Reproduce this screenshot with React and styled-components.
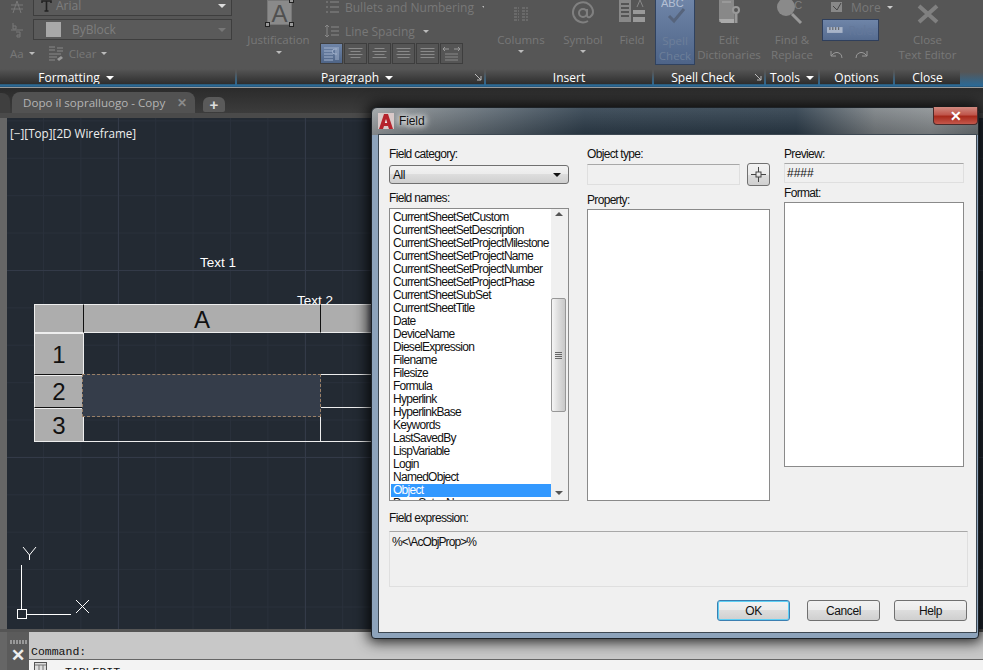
import React from 'react';
import styled, { createGlobalStyle, css } from 'styled-components';

const Global = createGlobalStyle`
  html, body { margin: 0; padding: 0; background: #333; }
  #root { width: 983px; height: 670px; }
`;
const Page = styled.div`
  position: relative; width: 983px; height: 670px; overflow: hidden;
  display: flex; flex-direction: column; font-family: "Liberation Sans", Arial, sans-serif;
`;
/* ---------- ribbon ---------- */
const Ribbon = styled.div`
  display: flex; gap: 2px; height: 88px; flex: none; box-sizing: border-box;
  padding-bottom: 2px; border-bottom: 1px solid #9a9a9a;
  background: linear-gradient(#565656 0, #565656 72px, #2a6a98 86px, #1f2f3a 88px);
`;
const Panel = styled.section`
  width: ${p => p.$w}px; height: 85px; flex: none; display: flex; flex-direction: column;
  background: #565656; overflow: hidden; position: relative;
  border-bottom: 1px solid #2b5c7c; box-sizing: border-box;
`;
const PanelBody = styled.div`
  flex: none; height: 69px; display: flex; position: relative; font-family: "Open Sans", sans-serif;
  font-size: 11.5px; color: #787878; line-height: 15px;
`;
const PanelTitle = styled.div`
  flex: none; height: 15px; box-sizing: border-box; display: flex; align-items: center; justify-content: center; gap: 6px;
  padding: 2px ${p => p.$pr || 0}px 0 0;
  color: #fff; font-family: "Open Sans", sans-serif; font-size: 12px; line-height: 13px;
  background: linear-gradient(#565656, #2e2e2e);
`;
const Launcher = styled.svg`
  position: absolute; right: 2px; bottom: 3px; width: 7px; height: 7px;
`;
const TitleCaret = styled.i`
  width: 0; height: 0; border: 4px solid transparent; border-top-color: #fff; border-bottom: 0;
`;
const Caret = styled.i`
  display: inline-block; width: 0; height: 0; flex: none; border: 3px solid transparent;
  border-top-color: ${p => p.$c || '#a0a0a0'}; border-bottom: 0;
`;
const FormatCol = styled.div`
  display: flex; flex-direction: column; width: 100%; margin-top: -5px;
`;
const FormatRow = styled.div`
  display: flex; align-items: center; height: 21px; margin-bottom: ${p => p.$mb || 3}px; padding-left: ${p => p.$pl || 0}px;
`;
const SideIcon = styled.svg`
  width: 14px; height: 16px; margin: 0 9px 0 10px; flex: none;
`;
const Select = styled.div`
  width: 199px; height: 21px; box-sizing: border-box; display: flex; align-items: center; gap: ${p => p.$gap ?? 6}px;
  border: 1px solid #3e3e3e; padding: 0 5px 0 ${p => p.$pl}px; font-family: "Open Sans", sans-serif;
  font-size: 12px; background: #5a5a5a; color: #7e7e7e;
  & > ${Caret} { margin-left: auto; border-width: 4px; border-bottom: 0; border-top-color: ${p => p.$cc || '#ddd'}; }
`;
const Swatch = styled.b`
  width: 15px; height: 15px; background: #a8a8a8; margin-right: 5px;
`;
const MiniItem = styled.span`
  display: inline-flex; align-items: center; gap: 5px; margin-right: ${p => p.$mr || 0}px;
`;
const JustifyCol = styled.div`
  width: 83px; flex: none; display: flex; flex-direction: column; align-items: center; margin-left: 0;
  padding-top: 32px; position: relative;
`;
const BigA = styled.div`
  position: absolute; top: 0; left: 30px; width: 25px; height: 25px; box-sizing: border-box;
  background: #8a8a8a; border: 1px solid #777; color: #505050; font: 24px/25px "Liberation Sans", sans-serif;
  text-align: center;
`;
const Handle = styled.i`
  position: absolute; width: 3px; height: 3px; border: 1px solid #222; background: #999;
  ${p => p.$pos === 'bl' ? css`left: -3px; bottom: -3px;` : p.$pos === 'br' ? css`right: -3px; bottom: -3px;` : css`top: -3px; right: -3px;`}
`;
const StackCol = styled.div`
  display: flex; flex-direction: column; padding-top: 0;
`;
const ListRow = styled.div`
  display: flex; align-items: center; gap: 6px; height: 24px; padding-left: 5px; font-size: 12px; white-space: nowrap;
`;
const AlignRow = styled.div`
  display: flex; gap: 1px;
`;
const AlignBtn = styled.div`
  width: 23px; height: 21px; box-sizing: border-box; display: flex; align-items: center; justify-content: center;
  border: 1px solid #3e3e3e; background: ${p => p.$on ? 'linear-gradient(#6f85a8,#4f6587)' : '#555'};
`;
const BigTool = styled.div`
  width: ${p => p.$w}px; flex: none; margin-left: ${p => p.$ml || 0}px; display: flex; flex-direction: column;
  align-items: center; text-align: center; padding-top: ${p => p.$on ? 33 : 32}px; position: relative; box-sizing: border-box;
  ${p => p.$on && css`background: linear-gradient(#6f85a8,#4e6488); border: 1px solid #30425f; height: 66px; margin-top: -1px;`}
  color: ${p => p.$on ? '#6d7f9a' : '#787878'};
  & > svg:first-child { position: absolute; top: ${p => p.$t ?? -1}px; left: 50%; transform: translateX(-50%); }
  & > ${Caret} { margin-top: 3px; }
`;
const OptionsCol = styled.div`
  display: flex; flex-direction: column; width: 100%; padding-left: 2px; font-size: 12px;
`;
const MoreRow = styled.div`
  display: flex; align-items: center; gap: 8px; height: 14px; margin-bottom: 5px; padding-left: 8px;
`;
const RulerBtn = styled.div`
  width: 57px; height: 22px; box-sizing: border-box; display: flex; align-items: center; gap: 6px; padding-left: 4px;
  border: 1px solid #2f3f5c; background: linear-gradient(#6f85a8,#566c90); color: #64789a;
`;
const UndoRow = styled.div`
  display: flex; gap: 12px; padding: 9px 0 0 8px;
`;
/* ---------- tabs ---------- */
const TabBar = styled.div`
  flex: none; height: 30px; display: flex; align-items: flex-end; background: linear-gradient(#2b2b2b, #3c3c3c);
  box-sizing: border-box; border-bottom: 5px solid #4a4a4a;
`;
const GhostTab = styled.div`
  width: 10px; height: 20px; background: #3f3f3f; border-radius: 0 8px 0 0;
`;
const Tab = styled.div`
  width: 183px; height: 21px; margin-left: 2px; display: flex; align-items: center; box-sizing: border-box;
  padding-left: 11px; background: #525252; border-radius: 8px 8px 0 0; color: #b4b4b4;
  font: 11.6px "Open Sans", sans-serif;
`;
const TabClose = styled.span`
  margin-left: 12px; color: #8a8a8a; font-size: 12px; font-weight: 700;
`;
const AddTab = styled.div`
  width: 22px; height: 15px; margin: 0 0 1px 8px; border-radius: 6px 6px 2px 2px; background: #5a5a5a;
  color: #ddd; font: 700 15px/15px "Liberation Sans", sans-serif; text-align: center;
`;
/* ---------- drawing area ---------- */
const Work = styled.div`
  flex: none; height: 511px; display: flex; background: #666;
`;
const Canvas = styled.div`
  margin-left: 7px; flex: 1; position: relative; overflow: hidden;
  background-color: #232a33;
  background-image:
    linear-gradient(90deg, #333a48 1px, transparent 1px),
    linear-gradient(#333a48 1px, transparent 1px),
    linear-gradient(90deg, #29303b 1px, transparent 1px),
    linear-gradient(#29303b 1px, transparent 1px);
  background-size: 187px 187px, 187px 187px, 37.4px 37.4px, 37.4px 37.4px;
  background-position: 111px 0, 0 152px, 36px 0, 0 2.4px;
`;
const ViewLabel = styled.div`
  position: absolute; left: 3px; top: 7px; color: #eee; font: 11.7px "Open Sans", sans-serif;
`;
const DrawText = styled.div`
  position: absolute; left: ${p => p.$x}px; top: ${p => p.$y}px; color: #fff; font-size: 13.5px; line-height: 14px;
`;
const Sheet = styled.div`
  position: absolute; left: 27px; top: 186px; width: 340px; display: grid;
  grid-template-columns: 50px 237px 53px; grid-template-rows: 29px 42px 33px 34px;
  font-family: "Liberation Sans", sans-serif; color: #111;
`;
const HeadCell = styled.div`
  background: #adadad; display: flex; align-items: center; justify-content: center; font-size: ${p => p.$fs || 24}px;
  padding-top: ${p => p.$pt || 0}px;
  box-sizing: border-box; border-top: 1px solid #eee; border-bottom: 1px solid ${p => p.$bb || '#eee'};
  border-right: 1px solid ${p => p.$br || '#111'}; border-left: ${p => p.$bl ? '1px solid #eee' : '0'};
  ${p => p.$fade && css`background: linear-gradient(90deg,#adadad 85%,#667 100%); border-right: 0;`}
`;
const BodyCell = styled.div`
  box-sizing: border-box; border-bottom: 1px solid ${p => p.$b || 'transparent'}; border-right: 1px solid ${p => p.$r || 'transparent'};
`;
const SelectedCell = styled.div`
  position: absolute; left: 48px; top: 70px; width: 239px; height: 43px; box-sizing: border-box;
  background: #353d4a; border: 1px dashed #9a8068;
`;
const Ucs = styled.svg`
  position: absolute; left: 10px; top: 427px;
`;
/* ---------- command line ---------- */
const Command = styled.div`
  flex: 1; display: flex; background: #666; border-top: 3px solid #555; padding-left: 7px;
`;
const Grip = styled.div`
  width: 22px; flex: none; background: #5b5b5b; display: flex; flex-direction: column; align-items: center;
  color: #eee; font: 700 17px/17px "Liberation Sans", sans-serif; padding-top: 8px; box-sizing: border-box;
  &::before { content: ""; width: 17px; height: 4px; margin-bottom: 3px; background: repeating-linear-gradient(90deg,#999 0 2px,transparent 2px 3px); }
`;
const CommandMain = styled.div`
  flex: 1; display: flex; flex-direction: column;
`;
const CommandHead = styled.div`
  height: 28px; box-sizing: border-box; background: #c8c8c8; border-bottom: 1px solid #666; padding: 13px 0 0 2px;
  font: 11.5px/14px "Liberation Mono", monospace; color: #111;
`;
const History = styled.div`
  flex: 1; background: #f3f3f3; display: flex; align-items: flex-start; gap: 11px; padding: 2px 0 0 5px;
  font: 11.5px/14px "Liberation Mono", monospace; color: #111; overflow: hidden;
  & > span { margin-top: 3px; }
`;
/* ---------- dialog ---------- */
const Dialog = styled.div`
  position: absolute; left: 371px; top: 107px; width: 608px; height: 532px; box-sizing: border-box;
  border: 1px solid #1d2227; border-radius: 6px 6px 4px 4px; padding: 26px 1px 5px 6px;
  background:
    linear-gradient(rgba(255,255,255,.1), rgba(0,0,0,.18)) 0 0 / 100% 27px no-repeat,
    linear-gradient(90deg, #9ea3a6 0, #7c8388 8%, #5a6670 20%, #2f3f4d 35%, #2c3c4a 70%, #7a8084 83%, #8a8f92 92%, #6d7478 100%) 0 0 / 100% 27px no-repeat,
    #8da3bb;
  box-shadow: 0 0 14px 3px rgba(0,0,0,.85);
`;
const WinIcon = styled.svg`
  position: absolute; left: 6px; top: 5px;
`;
const WinTitle = styled.div`
  position: absolute; left: 27px; top: 6px; font: 12px/14px "Liberation Sans", sans-serif; color: #111;
  letter-spacing: -.1px; text-shadow: 0 0 6px #fff, 0 0 6px #fff, 0 0 10px #fff;
`;
const WinClose = styled.div`
  position: absolute; right: 0; top: -1px; width: 45px; height: 18px; box-sizing: border-box; border: 1px solid #4a2a2a;
  border-top: 0; border-radius: 0 0 4px 4px; display: flex; align-items: center; justify-content: center;
  background: linear-gradient(#d08a80 0,#c0564c 45%,#a82a1c 55%,#c4584c 100%);
  color: #fff; font: 700 14px/14px "Liberation Sans", sans-serif;
`;
const Client = styled.div`
  height: 100%; box-sizing: border-box; background: #f0f0f0; border: 1px solid #3d4852; padding: 12px 8px 0 10px;
  display: flex; flex-direction: column; color: #111; font-size: 12px;
`;
const Columns = styled.div`
  display: flex; flex: none; height: 354px;
`;
const Col = styled.div`
  width: ${p => p.$w}px; margin-right: ${p => p.$mr || 0}px; flex: none; display: flex; flex-direction: column;
`;
const Label = styled.div`
  height: 14px; line-height: 14px; flex: none; margin-top: ${p => p.$mt || 0}px; letter-spacing: -0.68px;
`;
const Combo = styled.div`
  margin-top: 4px; height: 19px; box-sizing: border-box; border: 1px solid #707070; border-radius: 3px; flex: none;
  background: linear-gradient(#f2f2f2 0,#ebebeb 50%,#ddd 50%,#cfcfcf 100%); display: flex; align-items: center;
  justify-content: space-between; padding: 0 7px 0 3px; letter-spacing: -.4px;
`;
const ComboCaret = styled.i`
  width: 0; height: 0; border: 4px solid transparent; border-top-color: #111; border-bottom: 0; border-left-width: 4px;
`;
const ListBox = styled.div`
  margin-top: 3px; height: 293px; box-sizing: border-box; border: 1px solid #8a8a8a; background: #fff; display: flex;
  flex: none; overflow: hidden;
`;
const Items = styled.ul`
  list-style: none; margin: 0; padding: 2px 0 0 1px; width: 160px; flex: none; overflow: hidden;
`;
const Item = styled.li`
  height: 13px; line-height: 13px; padding-left: 2px; white-space: nowrap; letter-spacing: -0.72px;
  ${p => p.$sel && css`background: #3399ff; color: #fff;`}
`;
const ScrollBar = styled.div`
  width: 17px; flex: none; background: #f0f0f0; position: relative; display: flex; flex-direction: column; align-items: center;
`;
const ScrollArrow = styled.i`
  position: absolute; left: 4px; width: 0; height: 0; border: 4px solid transparent;
  ${p => p.$up ? css`top: 3px; border-bottom-color: #555; border-top: 0;` : css`bottom: 5px; border-top-color: #555; border-bottom: 0;`}
`;
const Thumb = styled.div`
  position: absolute; left: 0; top: 89px; width: 15px; height: 114px; box-sizing: border-box; border: 1px solid #979797; border-radius: 2px;
  background: linear-gradient(90deg,#f5f5f5,#dcdcdc 50%,#c8c8c8); display: flex; align-items: center; justify-content: center;
  &::after { content: ""; width: 7px; height: 7px; background: repeating-linear-gradient(#666 0 1px,transparent 1px 2px); }
`;
const DisabledBox = styled.div`
  box-sizing: border-box; background: #f0f0f0; border: 1px solid #dfdfdf; border-top-color: #a8a8a8; height: ${p => p.$h}px;
  flex: ${p => p.$grow ? 1 : 'none'}; margin-top: ${p => p.$mt || 0}px; padding: ${p => p.$pad || '0'};
  letter-spacing: ${p => p.$ls || 0}px;
`;
const ExpressionBox = styled(DisabledBox)`
  width: 579px;
`;
const PickRow = styled.div`
  display: flex; gap: 7px; margin-top: 2px; height: 23px; flex: none;
`;
const PickBtn = styled.button`
  width: 23px; height: 23px; padding: 0; box-sizing: border-box; border: 1px solid #707070; border-radius: 3px; display: flex;
  align-items: center; justify-content: center; background: linear-gradient(#f2f2f2 0,#ebebeb 50%,#ddd 50%,#cfcfcf 100%);
`;
const WhiteBox = styled.div`
  box-sizing: border-box; background: #fff; border: 1px solid #8a8a8a; height: ${p => p.$h}px; margin-top: 2px; flex: none;
`;
const Buttons = styled.div`
  display: flex; justify-content: flex-end; margin: 13px 1px 0 0;
`;
const Btn = styled.button`
  width: 73px; height: 21px; padding: 0; margin-left: ${p => p.$ml || 0}px; box-sizing: border-box; border-radius: 3px;
  border: 1px solid ${p => p.$def ? '#3c7fb1' : '#707070'}; color: #111; font: 12px "Liberation Sans", sans-serif;
  letter-spacing: -.4px;
  background: linear-gradient(#f2f2f2 0,#ebebeb 50%,#ddd 50%,#cfcfcf 100%);
  ${p => p.$def && css`box-shadow: inset 0 0 0 1px #5fd0f5;`}
`;

const names = ['CurrentSheetSetCustom','CurrentSheetSetDescription','CurrentSheetSetProjectMilestone','CurrentSheetSetProjectName','CurrentSheetSetProjectNumber','CurrentSheetSetProjectPhase','CurrentSheetSubSet','CurrentSheetTitle','Date','DeviceName','DieselExpression','Filename','Filesize','Formula','Hyperlink','HyperlinkBase','Keywords','LastSavedBy','LispVariable','Login','NamedObject','Object','PageSetupName'];
const G = '#787878';
const Lines = ({ d = [14,14,14,14] }) => (
  <svg width="17" height="15" viewBox="0 0 17 15">
    {d.map((w, i) => <rect key={i} x={(17 - w) / 2} y={2 + i * 3} width={w} height="1" fill="#8a8a8a" />)}
  </svg>
);

export default function App() {
  return (
    <Page>
      <Global />
      <Ribbon>
        <Panel $w={235}>
          <PanelBody>
            <FormatCol>
              <FormatRow>
                <SideIcon viewBox="0 0 14 16"><path d="M1 11h12M3 15l4-12 4 12M1 7h12" stroke={G} fill="none" /></SideIcon>
                <Select $pl={7} $gap={4}><svg width="11" height="14" viewBox="0 0 11 14"><path d="M1 4V2h9v2M5.500 2v10M3.500 12h4" stroke="#222" strokeWidth="1.6" fill="none" /></svg>Arial<Caret /></Select>
              </FormatRow>
              <FormatRow>
                <SideIcon viewBox="0 0 14 16"><path d="M1 8h12" stroke={G} /><path d="M3 1v6h3V4H3M6 10h4v5H7v-2h3" stroke={G} fill="none" /></SideIcon>
                <Select $pl={12} $cc="#777"><Swatch />ByBlock<Caret /></Select>
              </FormatRow>
              <FormatRow $pl={10}>
                <MiniItem $mr={13}>Aa<Caret $c="#bbb" /></MiniItem>
                <MiniItem><svg width="16" height="16" viewBox="0 0 16 16"><path d="M1 1h6M1 4h6M9 2h6M9 5h6M1 8h12M1 11h8M1 14h6" stroke="#888" /><path d="M9 13l4-3 2 2-4 3z" fill="#999" /></svg>Clear<Caret $c="#bbb" /></MiniItem>
              </FormatRow>
            </FormatCol>
          </PanelBody>
          <PanelTitle $pr={83}>Formatting<TitleCaret /></PanelTitle>
        </Panel>
        <Panel $w={247}>
          <PanelBody>
            <JustifyCol>
              <BigA>A<Handle $pos="bl" /><Handle $pos="br" /><Handle $pos="tr" /></BigA>
              Justification
              <Caret $c="#bbb" style={{ marginTop: 4 }} />
            </JustifyCol>
            <StackCol>
              <ListRow style={{ marginTop: -5 }}><svg width="14" height="14" viewBox="0 0 14 14"><path d="M1 2h2M1 7h2M1 12h2M5 2h9M5 7h9M5 12h9" stroke="#888" /></svg>Bullets and Numbering<Caret $c="#bbb" style={{ marginLeft: 2 }} /></ListRow>
              <ListRow><svg width="14" height="14" viewBox="0 0 14 14"><path d="M2 1v12M0 3l2-2 2 2M0 11l2 2 2-2M6 3h8M6 7h8M6 11h8" stroke="#888" fill="none" /></svg>Line Spacing<Caret $c="#bbb" style={{ marginLeft: 2 }} /></ListRow>
              <AlignRow>
                <AlignBtn $on><svg width="17" height="15" viewBox="0 0 17 15"><path d="M1 2h15M1 5h9M1 8h9M1 11h9M1 14h9" stroke="#a3b3cd" /><path d="M15 3v11M13 3v11M14 3h-2a2.500 2.500 0 0 0 0 5h2" stroke="#a3b3cd" fill="none" /></svg></AlignBtn>
                <AlignBtn><Lines d={[14,10,14,10]} /></AlignBtn>
                <AlignBtn><Lines d={[10,14,10,14]} /></AlignBtn>
                <AlignBtn><Lines d={[14,12,14,12]} /></AlignBtn>
                <AlignBtn><Lines d={[14,14,14,14]} /></AlignBtn>
                <AlignBtn><svg width="17" height="15" viewBox="0 0 17 15"><path d="M1 3h5M11 3h5M2 1L0 3l2 2M15 1l2 2-2 2" stroke="#9a9a9a" fill="none" /><path d="M2 8h13M2 11h13M2 14h13" stroke="#8a8a8a" /></svg></AlignBtn>
              </AlignRow>
            </StackCol>
          </PanelBody>
          <PanelTitle $pr={7}>Paragraph<TitleCaret /></PanelTitle>
          <Launcher viewBox="0 0 7 7"><path d="M0 0l6 6M2 6h4V2" stroke="#bbb" fill="none" /></Launcher>
        </Panel>
        <Panel $w={166}>
          <PanelBody>
            <BigTool $w={48} $ml={11} $t={7}>
              <svg width="16" height="14" viewBox="0 0 16 14"><path d="M1 1h5M1 4h5M1 7h5M1 10h5M1 13h5M9 1h6M9 4h6M9 7h6M9 10h6M9 13h6" stroke="#7e7e7e" strokeDasharray="3 1" /></svg>
              Columns<Caret $c="#bbb" />
            </BigTool>
            <BigTool $w={40} $ml={18} $t={0}>
              <svg width="22" height="26" viewBox="0 0 22 26"><circle cx="11" cy="13" r="4" fill="none" stroke="#808080" strokeWidth="2" /><path d="M15 9v6q0 3 3 2 3-2 3-5a10 10 0 1 0-5 9" fill="none" stroke="#808080" strokeWidth="2" /></svg>
              Symbol<Caret $c="#bbb" />
            </BigTool>
            <BigTool $w={26} $ml={16}>
              <svg width="28" height="26" viewBox="0 0 28 26"><rect x="1" y="0" width="12" height="23" fill="#888" /><path d="M3 5h8M3 9h8M3 13h8M3 17h8" stroke="#555" strokeWidth="2" /><rect x="15" y="11" width="12" height="4" fill="#999" /><rect x="15" y="18" width="12" height="5" fill="#999" /><path d="M19 8l3-7 3 7" stroke="#888" fill="none" /></svg>
              Field
            </BigTool>
          </PanelBody>
          <PanelTitle>Insert</PanelTitle>
        </Panel>
        <Panel $w={110}>
          <PanelBody>
            <BigTool $w={40} $ml={1} $on $t={-2}>
              <svg width="28" height="26" viewBox="0 0 28 26"><text x="0" y="9" fontSize="11" fill="#b4c0d4" fontFamily="Liberation Sans">ABC</text><path d="M8 18l5 5 10-12" stroke="#56647c" strokeWidth="3" fill="none" /></svg>
              Spell<br />Check
            </BigTool>
            <BigTool $w={64} $ml={2}>
              <svg width="26" height="26" viewBox="0 0 26 26"><path d="M3 0h15v23H3z" fill="#888" /><path d="M3 20h15v4H5z" fill="#aaa" /><path d="M6 3h9" stroke="#aaa" /><circle cx="20" cy="11" r="3" fill="none" stroke="#999" strokeWidth="2" /><path d="M20 14v10" stroke="#999" strokeWidth="3" /></svg>
              Edit<br />Dictionaries
            </BigTool>
          </PanelBody>
          <PanelTitle $pr={12}>Spell Check<Launcher viewBox="0 0 7 7"><path d="M0 0l6 6M2 6h4V2" stroke="#bbb" fill="none" /></Launcher></PanelTitle>
        </Panel>
        <Panel $w={52}>
          <PanelBody>
            <BigTool $w={44} $ml={4}>
              <svg width="34" height="28" viewBox="0 0 34 28"><text x="12" y="10" fontSize="11" fill="#808080" fontFamily="Liberation Sans">BC</text><circle cx="11" cy="8" r="9" fill="#8a8a8a" /><path d="M17 15l9 9" stroke="#999" strokeWidth="3" /></svg>
              Find &amp;<br />Replace
            </BigTool>
          </PanelBody>
          <PanelTitle>Tools<TitleCaret /></PanelTitle>
        </Panel>
        <Panel $w={73}>
          <PanelBody>
            <OptionsCol>
              <MoreRow><svg width="13" height="13" viewBox="0 0 13 13"><rect x="1" y="1" width="11" height="10" fill="#888" /><path d="M3 5l4 4 4-7" stroke="#444" fill="none" /></svg>More<Caret $c="#ccc" style={{ marginLeft: -2 }} /></MoreRow>
              <RulerBtn><svg width="16" height="8" viewBox="0 0 16 8"><rect x="0" y="1" width="16" height="6" fill="#a8b4c8" /><path d="M3 1v3M6 1v3M9 1v3M12 1v3" stroke="#555" /></svg>Ruler</RulerBtn>
              <UndoRow><svg width="13" height="9" viewBox="0 0 13 9"><path d="M1 1v5h5M1 6q4-5 8-3 3 1 3 5" stroke="#999" fill="none" /></svg><svg width="13" height="9" viewBox="0 0 13 9"><path d="M12 1v5H7M12 6Q8 1 4 3 1 4 1 8" stroke="#999" fill="none" /></svg></UndoRow>
            </OptionsCol>
          </PanelBody>
          <PanelTitle>Options</PanelTitle>
        </Panel>
        <Panel $w={65}>
          <PanelBody>
            <BigTool $w={65} $t={4}>
              <svg width="22" height="20" viewBox="0 0 22 20"><path d="M2 2l18 16M20 2L2 18" stroke="#808080" strokeWidth="4" /></svg>
              Close<br />Text Editor
            </BigTool>
          </PanelBody>
          <PanelTitle>Close</PanelTitle>
        </Panel>
      </Ribbon>
      <TabBar>
        <GhostTab />
        <Tab>Dopo il sopralluogo - Copy<TabClose>✕</TabClose></Tab>
        <AddTab>+</AddTab>
      </TabBar>
      <Work>
        <Canvas>
          <ViewLabel>[−][Top][2D Wireframe]</ViewLabel>
          <DrawText $x={193} $y={138}>Text 1</DrawText>
          <DrawText $x={290} $y={176}>Text 2</DrawText>
          <Sheet>
            <HeadCell $bl />
            <HeadCell $pt={3}>A</HeadCell>
            <HeadCell $fade />
            <HeadCell $bl $pt={1} $br="#eee" $bb="#111">1</HeadCell>
            <BodyCell />
            <BodyCell $b="#eee" />
            <HeadCell $bl $bb="#111" $br="#222">2</HeadCell>
            <BodyCell />
            <BodyCell $b="#eee" />
            <HeadCell $bl $pt={1} $br="#eee">3</HeadCell>
            <BodyCell $b="#eee" $r="#eee" />
            <BodyCell $b="#eee" />
            <SelectedCell />
          </Sheet>
          <Ucs width="80" height="76" viewBox="0 0 80 76">
            <path d="M4.500 20v44M9 69.500h45" stroke="#fff" fill="none" />
            <rect x=".5" y="64.500" width="9" height="9" fill="none" stroke="#fff" />
            <path d="M6 2l6.500 8L19 2M12.500 10v5" stroke="#fff" fill="none" />
            <path d="M59 55l13 13M72 55L59 68" stroke="#fff" fill="none" />
          </Ucs>
        </Canvas>
      </Work>
      <Command>
        <Grip>✕</Grip>
        <CommandMain>
          <CommandHead>Command:</CommandHead>
          <History>
            <svg width="13" height="10" viewBox="0 0 13 10"><rect x=".5" y=".5" width="12" height="9" fill="#ddd" stroke="#555" /><path d="M1 3h11M5 3v6M9 3v6" stroke="#777" /></svg>
            <span>_TABLEDIT</span>
          </History>
        </CommandMain>
      </Command>
      <Dialog>
        <WinIcon width="16" height="16" viewBox="0 0 16 16"><rect width="16" height="16" fill="#d9c9c9" /><path d="M1 16L6 1h4l5 15h-4l-1-3H6l-1 3z" fill="#b5232d" /><path d="M6.800 10h2.400L8 6z" fill="#eee" /></WinIcon>
        <WinTitle>Field</WinTitle>
        <WinClose>✕</WinClose>
        <Client>
          <Columns>
            <Col $w={180} $mr={18}>
              <Label>Field category:</Label>
              <Combo>All<ComboCaret /></Combo>
              <Label $mt={7}>Field names:</Label>
              <ListBox>
                <Items>{names.map(n => <Item key={n} $sel={n === 'Object'}>{n}</Item>)}</Items>
                <ScrollBar><ScrollArrow $up /><Thumb /><ScrollArrow /></ScrollBar>
              </ListBox>
            </Col>
            <Col $w={183} $mr={14}>
              <Label>Object type:</Label>
              <PickRow>
                <DisabledBox $h={21} $grow $mt={1} />
                <PickBtn><svg width="15" height="15" viewBox="0 0 15 15"><rect x="5" y="5" width="5" height="5" fill="none" stroke="#444" /><path d="M7.500 0v5M7.500 10v5M0 7.500h5M10 7.500h5" stroke="#444" /></svg></PickBtn>
              </PickRow>
              <Label $mt={7}>Property:</Label>
              <WhiteBox $h={292} />
            </Col>
            <Col $w={180}>
              <Label>Preview:</Label>
              <DisabledBox $h={20} $mt={2} $pad="2px 2px">####</DisabledBox>
              <Label $mt={3}>Format:</Label>
              <WhiteBox $h={265} />
            </Col>
          </Columns>
          <Label $mt={10}>Field expression:</Label>
          <ExpressionBox $h={56} $mt={6} $pad="3px 2px" $ls={-0.9}>%&lt;\AcObjProp&gt;%</ExpressionBox>
          <Buttons>
            <Btn $def>OK</Btn>
            <Btn $ml={17}>Cancel</Btn>
            <Btn $ml={14}>Help</Btn>
          </Buttons>
        </Client>
      </Dialog>
    </Page>
  );
}
